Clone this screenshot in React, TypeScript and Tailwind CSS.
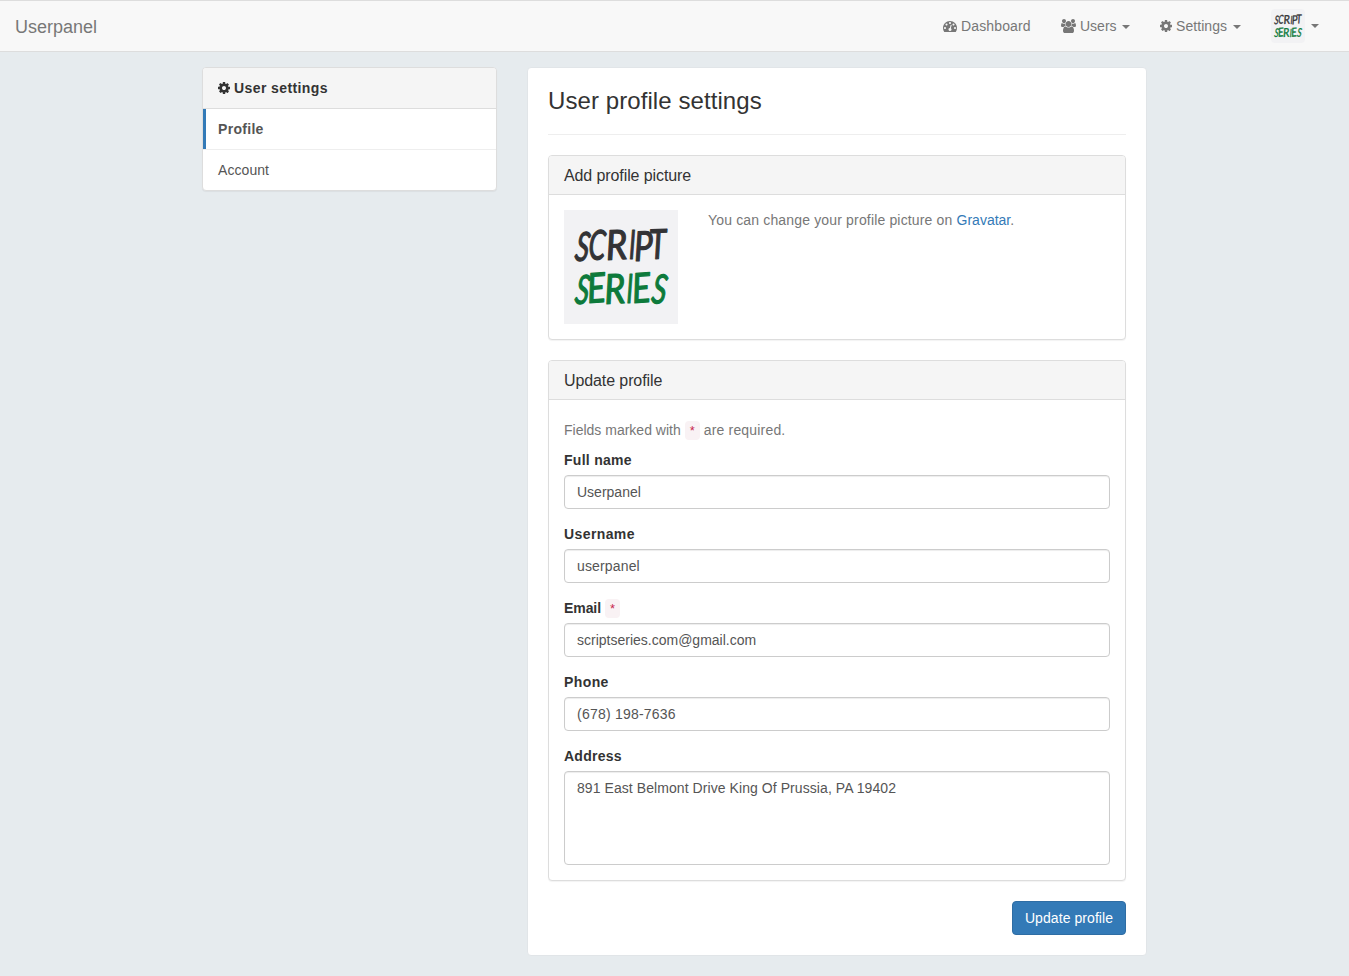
import React from "react";

function DashboardIcon() {
  return (
    <svg className="h-3.5 w-3.5 shrink-0 fill-current" viewBox="0 0 1792 1792">
      <path d="M384 1152q0-53-37.5-90.5t-90.5-37.5-90.5 37.5-37.5 90.5 37.5 90.5 90.5 37.5 90.5-37.5 37.5-90.5zm192-448q0-53-37.5-90.5t-90.5-37.5-90.5 37.5-37.5 90.5 37.5 90.5 90.5 37.5 90.5-37.5 37.5-90.5zm428 481l101-382q6-26-7.5-48.5t-38.5-29.5-48 6.5-30 39.5l-101 382q-60 5-107 43.5t-63 98.5q-20 77 20 146t117 89 146-20 89-117q16-60-6-117t-72-91zm660-33q0-53-37.5-90.5t-90.5-37.5-90.5 37.5-37.5 90.5 37.5 90.5 90.5 37.5 90.5-37.5 37.5-90.5zm-640-640q0-53-37.5-90.5t-90.5-37.5-90.5 37.5-37.5 90.5 37.5 90.5 90.5 37.5 90.5-37.5 37.5-90.5zm448 192q0-53-37.5-90.5t-90.5-37.5-90.5 37.5-37.5 90.5 37.5 90.5 90.5 37.5 90.5-37.5 37.5-90.5zm320 448q0 261-141 483-19 29-54 29h-1402q-35 0-54-29-141-221-141-483 0-182 71-348t191-286 286-191 348-71 348 71 286 191 191 286 71 348z" />
    </svg>
  );
}

function UsersIcon() {
  return (
    <svg className="h-3.5 w-[15px] shrink-0 fill-current" viewBox="64 0 1920 1792">
      <path d="M657 896q-162 5-265 128h-134q-82 0-138-40.5t-56-118.5q0-353 124-353 6 0 43.5 21t97.5 42.5 119 21.5q67 0 133-23-5 37-5 66 0 139 81 256zm1071 637q0 120-73 189.5t-194 69.5h-874q-121 0-194-69.5t-73-189.5q0-53 3.5-103.5t14-109 26.5-108.5 43-97.5 62-81 85.5-53.5 111.5-20q10 0 43 21.5t73 48 107 48 135 21.5 135-21.5 107-48 73-48 43-21.5q61 0 111.5 20t85.5 53.5 62 81 43 97.5 26.5 108.5 14 109 3.5 103.5zm-1024-1277q0 106-75 181t-181 75-181-75-75-181 75-181 181-75 181 75 75 181zm704 384q0 159-112.5 271.5t-271.5 112.5-271.5-112.5-112.5-271.5 112.5-271.5 271.5-112.5 271.5 112.5 112.5 271.5zm576 225q0 78-56 118.5t-138 40.5h-134q-103-123-265-128 81-117 81-256 0-29-5-66 66 23 133 23 59 0 119-21.5t97.5-42.5 43.5-21q124 0 124 353zm-128-609q0 106-75 181t-181 75-181-75-75-181 75-181 181-75 181 75 75 181z" />
    </svg>
  );
}

function CogIcon() {
  return (
    <svg className="h-3.5 w-3 shrink-0 fill-current" viewBox="128 0 1536 1792">
      <path d="M1152 896q0-106-75-181t-181-75-181 75-75 181 75 181 181 75 181-75 75-181zm512-109v222q0 12-8 23t-20 13l-185 28q-19 54-39 91 35 50 107 138 10 12 10 25t-9 23q-27 37-99 108t-94 71q-12 0-26-9l-138-108q-44 23-91 38-16 136-29 186-7 28-36 28h-222q-14 0-24.5-8.5t-11.5-21.5l-28-184q-49-16-90-37l-141 107q-10 9-25 9-14 0-25-11-126-114-165-168-7-10-7-23 0-12 8-23 15-21 51-66.5t54-70.5q-27-50-41-99l-183-27q-13-2-21-12.5t-8-23.5v-222q0-12 8-23t19-13l186-28q14-46 39-92-40-57-107-138-10-12-10-24 0-10 9-23 26-36 98.5-107.5t94.5-71.5q13 0 26 10l138 107q44-23 91-38 16-136 29-186 7-28 36-28h222q14 0 24.5 8.5t11.5 21.5l28 184q49 16 90 37l142-107q9-9 24-9 13 0 25 10 129 119 165 170 7 8 7 22 0 12-8 23-15 21-51 66.5t-54 70.5q26 50 41 98l183 28q13 2 21 12.5t8 23.5z" />
    </svg>
  );
}

function Caret() {
  return <span className="h-0 w-0 border-x-4 border-t-4 border-x-transparent border-t-current" />;
}

// Each letter: glyph, x, baseline, horizontal scale, rotation
type Letter = [string, number, number, number, number];

const SCRIPT: Letter[] = [
  ["S", 10, 50, 0.66, 8],
  ["C", 24, 49, 0.66, 3],
  ["R", 42.5, 50, 0.9, -3],
  ["I", 65, 49, 0.6, 0],
  ["P", 70.5, 51, 0.82, -2],
  ["T", 85.5, 49, 0.78, -2],
];

const SERIES: Letter[] = [
  ["S", 10, 93, 0.66, 8],
  ["E", 24, 93, 0.84, -4],
  ["R", 41, 94, 0.88, -3],
  ["I", 62.5, 93, 0.6, 0],
  ["E", 69, 93, 0.84, -4],
  ["S", 86.5, 92.5, 0.7, 8],
];

function Word({ letters, className }: { letters: Letter[]; className: string }) {
  return (
    <g className={className} strokeWidth="1.2" strokeLinejoin="round">
      {letters.map(([ch, x, y, sx, rot], i) => (
        <text key={i} transform={`translate(${x} ${y}) rotate(${rot}) scale(${sx} 1)`}>
          {ch}
        </text>
      ))}
    </g>
  );
}

function Logo({ className }: { className: string }) {
  return (
    <svg className={`shrink-0 bg-[#f2f2f4] font-['Lato',sans-serif] text-[41px] italic ${className}`} viewBox="0 0 114 114">
      <Word letters={SCRIPT} className="fill-[#333335] stroke-[#333335]" />
      <Word letters={SERIES} className="fill-[#0d7a3b] stroke-[#0d7a3b]" />
    </svg>
  );
}

function Required() {
  return (
    <code className="block h-[19px] w-[15px] rounded bg-[#f9f2f4] pt-0.5 text-center font-['Liberation_Mono',monospace] text-[12.6px] font-normal leading-[19px] tracking-normal text-[#c7254e]">*</code>
  );
}

type FieldProps = { label: string; value: string; required?: boolean; labelClass?: string; inputClass?: string };

function Field({ label, value, required, labelClass = "", inputClass = "" }: FieldProps) {
  return (
    <div className="mb-[15px]">
      <label className={`mb-[5px] flex h-5 items-center gap-1 font-bold text-[#333] ${labelClass}`}>
        <span>{label}</span>{required && <Required />}
      </label>
      <input
        className={`block h-[34px] w-full rounded border border-[#ccc] bg-white px-3 text-[#555] shadow-[inset_0_1px_1px_rgba(0,0,0,0.075)] ${inputClass}`}
        defaultValue={value}
      />
    </div>
  );
}

function Panel({ title, children }: { title: string; children: React.ReactNode }) {
  return (
    <section className="mb-5 rounded border border-[#ddd] bg-white shadow-[0_1px_1px_rgba(0,0,0,0.05)]">
      <h3 className="flex h-[39px] items-center rounded-t-[3px] border-b border-[#ddd] bg-[#f5f5f5] px-[15px] pt-0.5 text-base tracking-[-0.1px] text-[#333]">{title}</h3>
      <div className="p-[15px]">{children}</div>
    </section>
  );
}

export default function App() {
  return (
    <div className="min-h-[976px] bg-[#e6ebee] font-['Liberation_Sans',Arial,sans-serif] text-sm leading-5 text-[#333]">
      <nav className="flex h-[52px] items-center justify-between border-y border-[#ddd] bg-[#f8f8f8] px-[15px] text-[#777]">
        <a className="pt-0.5 text-lg leading-5">Userpanel</a>
        <div className="flex h-full items-center">
          <a className="flex items-center gap-1 px-[15px]"><DashboardIcon /><span className="w-[70px] tracking-[0.14px]">Dashboard</span></a>
          <a className="flex items-center gap-1 px-[15px]"><UsersIcon /><span className="w-[37px]">Users</span><span className="ml-px flex pt-px"><Caret /></span></a>
          <a className="flex items-center gap-1 px-[15px]"><CogIcon /><span className="w-[51px] tracking-[0.06px]">Settings</span><span className="ml-0.5 flex pt-px"><Caret /></span></a>
          <a className="flex items-center gap-1.5 px-[15px]"><Logo className="size-[34px] rounded" /><Caret /></a>
        </div>
      </nav>

      <main className="flex items-start gap-[30px] pl-[202px] pt-[15px]">
        <aside className="w-[295px] rounded border border-[#ddd] bg-white shadow-[0_1px_1px_rgba(0,0,0,0.05)]">
          <div className="flex h-[41px] items-center gap-1 rounded-t-[3px] border-b border-[#ddd] bg-[#f5f5f5] px-[15px] font-bold tracking-[0.4px]">
            <CogIcon /><span>User settings</span>
          </div>
          <div className="border-b border-[#eee]">
            <a className="flex h-10 items-center border-l-[3px] border-l-[#337ab7] pl-3 font-bold tracking-[0.3px] text-[#555]">Profile</a>
          </div>
          <a className="flex h-10 items-center px-[15px] tracking-[0.07px] text-[#555]">Account</a>
        </aside>

        <div className="w-[620px] rounded border border-[#e1e5e8] bg-white px-5 pb-5 pt-[18px]">
          <h1 className="border-b border-[#eee] pb-[18px] text-2xl leading-[30px] tracking-[0.08px]">User profile settings</h1>
          <div className="pt-5">
            <Panel title="Add profile picture">
              <div className="flex items-start gap-[30px]">
                <Logo className="size-[114px]" />
                <p className="text-[#777]"><span className="tracking-[0.16px]">You can change your profile picture on </span><a className="text-[#337ab7]">Gravatar</a>.</p>
              </div>
            </Panel>
            <Panel title="Update profile">
              <p className="mb-2.5 mt-[5px] flex h-5 items-center gap-1 text-[#777]">
                <span>Fields marked with</span><Required /><span className="tracking-[0.18px]">are required.</span>
              </p>
              <Field label="Full name" value="Userpanel" labelClass="tracking-[0.28px]" />
              <Field label="Username" value="userpanel" labelClass="tracking-[0.4px]" inputClass="tracking-[0.15px]" />
              <Field label="Email" value="scriptseries.com@gmail.com" labelClass="tracking-[-0.08px]" required />
              <Field label="Phone" value="(678) 198-7636" labelClass="tracking-[0.4px]" inputClass="tracking-[0.22px]" />
              <label className="mb-[5px] block font-bold tracking-[0.25px]">Address</label>
              <textarea
                className="block h-[94px] w-full resize-none rounded border border-[#ccc] px-3 py-1.5 tracking-[0.07px] text-[#555] shadow-[inset_0_1px_1px_rgba(0,0,0,0.075)]"
                defaultValue="891 East Belmont Drive King Of Prussia, PA 19402"
              />
            </Panel>
            <div className="flex justify-end">
              <button className="h-[34px] w-[114px] rounded border border-[#2e6da4] bg-[#337ab7] tracking-[0.07px] text-white">Update profile</button>
            </div>
          </div>
        </div>
      </main>
    </div>
  );
}
